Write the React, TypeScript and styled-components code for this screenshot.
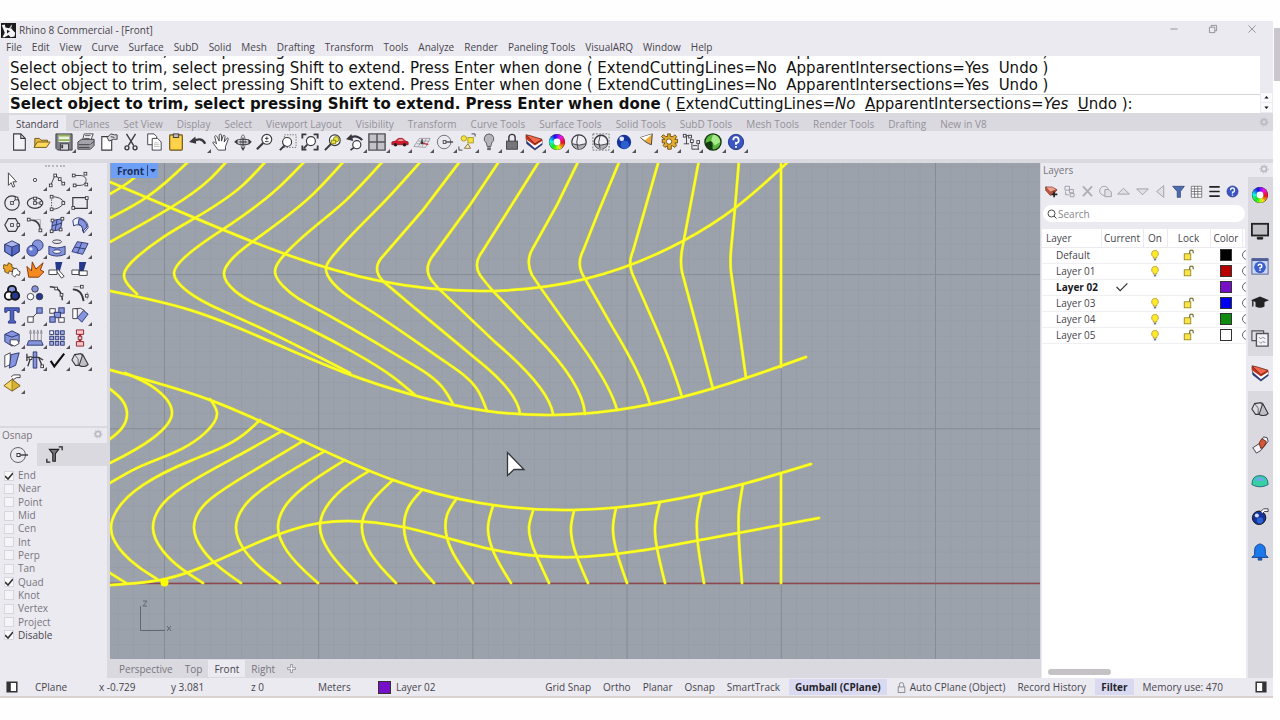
import React, { useState } from "react";
import styled, { createGlobalStyle, css } from "styled-components";

const c = {
  face: "#eceaf1",
  strip: "#dbd9e0",
  ink: "#47454d",
  dim: "#77757d",
  faint: "#939199",
  accent: "#d9daf1",
  canvas: "#9ca2ab",
};

const Global = createGlobalStyle`
  * { box-sizing: border-box; }
  body { margin: 0; background: #fefefe; }
  button, input { font: inherit; color: inherit; }
  button { border: 0; padding: 0; background: none; cursor: default; white-space: nowrap; }
`;

/* ---------- layout ---------- */

const Page = styled.div`
  display: flex;
  gap: 1px;
  min-height: 100vh;
  padding: 21px 0 22px;
  font: 10px/14px "Open Sans", "Noto Sans", sans-serif;
  color: ${c.ink};
`;
const Window = styled.div`
  flex: 1;
  min-width: 0;
  display: flex;
  flex-direction: column;
  background: ${c.face};
  border-bottom: 2px solid #d9d2cf;
`;
const PageScroll = styled.div`
  width: 6px;
  padding-top: 7px;
`;
const PageThumb = styled.div`
  height: 53px;
  background: #c9c7cd;
`;
const TitleBar = styled.header`
  display: flex;
  align-items: center;
  height: 18px;
  padding: 0 14px 0 1px;
  gap: 3px;
`;
const Title = styled.h1`
  flex: 1;
  margin: 0;
  font-size: 10px;
  font-weight: 400;
`;
const WindowButtons = styled.div`
  display: flex;
  gap: 25px;
  color: #88868e;
  button { width: 14px; height: 14px; }
`;
const MenuBar = styled.nav`
  display: flex;
  height: 17px;
  padding: 0 0 1px 6px;
  gap: 10px;
`;
const CommandArea = styled.section`
  display: flex;
  height: 57px;
  border-left: 9px solid ${c.face};
  background: #fff;
  color: #111;
  font: 15px/17px "DejaVu Sans", Verdana, sans-serif;
`;
const CommandText = styled.div`
  flex: 1;
  min-width: 0;
  display: flex;
  flex-direction: column;
  justify-content: flex-end;
  overflow: hidden;
  white-space: pre;
`;
const Line = styled.div`
  flex: none;
  padding-left: 1px;
  height: 17px;
`;
const Prompt = styled.div`
  flex: none;
  height: 19px;
  padding: 1px 0 0 1px;
  border-top: 1px solid #d6d5da;
`;
const Option = styled.button`
  &::first-letter { text-decoration: underline; }
`;
const Spinner = styled.div`
  width: 13px;
  display: flex;
  flex-direction: column;
  justify-content: flex-end;
  background: ${c.face};
  button { height: 9px; background: #fafafc; margin: 0 1px 1px; line-height: 0; }
`;
const Tabs = styled.div`
  display: flex;
  align-items: center;
  height: 18px;
  padding: 2px 4px 0 9px;
  background: ${c.strip};
  color: ${c.faint};
`;
const Tab = styled.button<{ $on?: boolean }>`
  height: 16px;
  padding: 2px 7px 0;
  ${(p) => p.$on && css`background: ${c.face}; color: ${c.ink};`}
`;
const Grow = styled.div`
  flex: 1;
`;
const Toolbar = styled.div`
  display: flex;
  width: 739px;
  max-width: 100%;
  margin-left: 8px;
  height: 28px;
  button { flex: 1; }
`;
const Tool = styled.button<{ $more?: boolean }>`
  position: relative;
  display: flex;
  align-items: center;
  justify-content: center;
  height: 22px;
  min-width: 0;
  ${(p) => p.$more && css`
    &::after {
      content: "";
      position: absolute;
      right: -1px;
      bottom: 0;
      border: 2px solid transparent;
      border-right-color: #55535a;
      border-bottom-color: #55535a;
    }
  `}
`;
const Work = styled.main`
  flex: 1;
  display: flex;
  border-top: 4px solid ${c.strip};
`;
const Left = styled.aside`
  width: 108px;
  display: flex;
  flex-direction: column;
  border-right: 1px solid ${c.strip};
`;
const ToolBox = styled.section`
  min-height: 265px;
  border-bottom: 2px solid ${c.strip};
`;
const Grip = styled.div`
  width: 20px;
  height: 4px;
  margin: 0 0 2px 45px;
  border-bottom: 2px dotted #b9b7be;
`;
const ToolGrid = styled.div`
  display: grid;
  grid-template-columns: repeat(4, 1fr);
  grid-template-rows: repeat(10, 1fr);
  width: 90px;
  height: 225px;
  margin-left: 1px;
`;
const PanelHead = styled.div`
  display: flex;
  align-items: center;
  justify-content: space-between;
  height: 14px;
  padding: 0 4px 0 2px;
  color: ${c.dim};
  h2 { margin: 0; font-size: 10px; font-weight: 400; }
`;
const SnapTabs = styled.div`
  display: flex;
  height: 23px;
  margin-top: 1px;
  button { width: 37px; display: grid; place-items: center; }
  button + button { flex: 1; padding-right: 36px; background: ${c.strip}; }
`;
const SnapList = styled.div`
  display: grid;
  grid-auto-rows: 1fr;
  height: 173px;
  margin-top: 3px;
  padding-left: 4px;
  line-height: 13px;
`;
const SnapItem = styled.label<{ $strong?: boolean }>`
  display: flex;
  align-items: center;
  gap: 4px;
  color: ${(p) => (p.$strong ? c.ink : c.dim)};
  input {
    appearance: none;
    width: 10px;
    height: 10px;
    margin: 0;
    border: 1px solid #d8d6dd;
    background: #f5f4f8;
  }
  input:checked {
    background: #fbfbfd url("data:image/svg+xml,%3Csvg xmlns='http://www.w3.org/2000/svg' viewBox='0 0 10 10'%3E%3Cpath d='M1 5l3 3 5-6' fill='none' stroke='%23333' stroke-width='1.6'/%3E%3C/svg%3E") center / 10px no-repeat;
  }
`;
const Center = styled.section`
  flex: 1;
  min-width: 0;
  display: flex;
  flex-direction: column;
  padding: 0 1px 0 2px;
  background: ${c.strip};
`;
const Viewport = styled.div`
  position: relative;
  flex: 1;
  background: ${c.canvas};
  overflow: hidden;
`;
const Drawing = styled.svg`
  position: absolute;
  inset: 0;
  width: 100%;
  height: 100%;
`;
const ViewLabel = styled.button`
  position: absolute;
  top: 0;
  left: 1px;
  display: flex;
  align-items: center;
  gap: 3px;
  height: 15px;
  padding: 0 0 0 6px;
  background: #6e9ff6;
  color: #1c2f5c;
  font-weight: 700;
  svg { border-left: 1px solid #2d4a84; }
`;
const ViewTabs = styled.div`
  display: flex;
  align-items: center;
  height: 19px;
  padding-left: 3px;
  color: ${c.dim};
  ${Tab} { padding: 0 6px; height: 17px; }
`;
const Right = styled.aside`
  width: 232px;
  display: flex;
  flex-direction: column;
`;
const RightBody = styled.div`
  flex: 1;
  display: flex;
`;
const Layers = styled.section`
  flex: 1;
  min-width: 0;
  display: flex;
  flex-direction: column;
  padding: 0 2px 0 1px;
`;
const LayerTools = styled.div`
  display: flex;
  height: 28px;
  width: 200px;
  button { flex: 1; display: grid; place-items: center; min-width: 0; }
`;
const Search = styled.label`
  display: flex;
  align-items: center;
  gap: 1px;
  height: 17px;
  margin: 0 1px 7px;
  padding: 0 4px;
  border-radius: 9px;
  background: #fff;
  input { flex: 1; min-width: 0; border: 0; padding: 0; height: 15px; background: none; outline: 0; }
  input::placeholder { color: #88868e; opacity: 1; }
`;
const TableArea = styled.div`
  flex: 1;
  display: flex;
  flex-direction: column;
  justify-content: space-between;
  background: #fff;
  overflow: hidden;
`;
const LayerTable = styled.table`
  width: 100%;
  table-layout: fixed;
  border-collapse: collapse;
  th { height: 18px; padding: 0; font-weight: 400; border-right: 1px solid #eceaf0; border-bottom: 1px solid #eceaf0; overflow: hidden; }
  th:first-child { text-align: left; padding-left: 4px; }
  td { height: 16px; padding: 0; text-align: center; border-bottom: 1px solid #f0eff3; line-height: 0; overflow: hidden; }
  td:first-child { text-align: left; padding-left: 14px; line-height: 14px; }
`;
const LayerRow = styled.tr<{ $current?: boolean }>`
  ${(p) => p.$current && css`font-weight: 700; color: #1b1a1f;`}
`;
const Swatch = styled.button<{ $color: string; $size?: number }>`
  width: ${(p) => p.$size ?? 12}px;
  height: ${(p) => p.$size ?? 12}px;
  border: 1px solid #333;
  background: ${(p) => p.$color};
`;
const ScrollThumb = styled.div`
  width: 63px;
  height: 6px;
  margin: 0 0 3px 6px;
  border-radius: 3px;
  background: #c4c2c5;
`;
const SideTabs = styled.nav`
  width: 25px;
  display: flex;
  flex-direction: column;
  background: ${c.strip};
`;
const SideIcons = styled.div`
  display: grid;
  grid-auto-rows: 1fr;
  height: 393px;
`;
const SideTab = styled.button<{ $on?: boolean }>`
  display: grid;
  place-items: center;
  padding-right: 1px;
  ${(p) => p.$on && css`background: ${c.face};`}
`;
const StatusBar = styled.footer`
  display: flex;
  align-items: center;
  height: 18px;
  padding: 0 6px;
`;
const Cell = styled.span<{ $w: number; $end?: boolean }>`
  width: ${(p) => p.$w}px;
  display: flex;
  align-items: center;
  justify-content: ${(p) => (p.$end ? "flex-end" : "flex-start")};
  gap: 5px;
  white-space: nowrap;
`;
const Toggle = styled.button<{ $on?: boolean }>`
  height: 16px;
  padding: 0 6px;
  display: flex;
  align-items: center;
  gap: 3px;
  ${(p) => p.$on && css`
    margin: 0 3px;
    background: ${c.accent};
    font-weight: 700;
    color: #24232a;
  `}
`;

/* ---------- icons, all on a 20 x 20 board ---------- */

const K = "#3a383f";
const wheel = (r: number, w: number) =>
  Array.from({ length: 24 }, (_, i) => {
    const p = (a: number) => `${10 + r * Math.cos(a)} ${10 + r * Math.sin(a)}`;
    const a = (i * Math.PI) / 12;
    return (
      <path key={i} d={`M${p(a)}A${r} ${r} 0 0 1 ${p(a + 0.3)}`} stroke={`hsl(${i * 15},95%,52%)`} strokeWidth={w} fill="none" />
    );
  });
const node = (x: number, y: number) => <rect key={`${x}-${y}`} x={x - 1.5} y={y - 1.5} width="3" height="3" fill="#fff" stroke={K} />;
const B = "#8594dc";
const BD = "#27326e";

const art: Record<string, React.ReactNode> = {
  new: <path d="M4 1h8l5 5v13H4zM12 1v5h5" fill="#f3f3f5" stroke={K} strokeWidth="1.200" />,
  open: <><path d="M2 16V6h5l2 2h7v3" fill="#e6b93c" stroke="#6b5412" /><path d="M1 16l4-6h14l-4 6z" fill="#ffd95c" stroke="#6b5412" /></>,
  save: <><path d="M1 1h18v18H3l-2-2z" fill="#7e8087" stroke={K} /><path d="M4 2h12v8H4z" fill="#eef2dc" /><path d="M4 3h12M4 8h12" stroke="#8cb45c" strokeWidth="2" /><path d="M6 12h9v7H6z" fill="#d8d8dc" stroke={K} /><path d="M8 13v4" stroke={K} strokeWidth="2" /></>,
  print: <><path d="M6 9l2-8h10l-3 8" fill="#fff" stroke={K} /><path d="M1 10l4-3h14v7l-4 4H1z" fill="#a3a2a9" stroke={K} /><path d="M2 13h12M9 3h6M8 6h6M15 13l4-4M2 16h12" stroke={K} /></>,
  props: <><path d="M2 4h11v15H2z" fill="#fff" stroke={K} strokeWidth="1.200" /><path d="M8 5l4-4 4 1h3v5h-4l-5 2z" fill="#d6d5da" stroke={K} /><path d="M12 4l4 1" stroke={K} /></>,
  cut: <><path d="M5 1l8 13M15 1L7 14" stroke={K} strokeWidth="1.5" /><circle cx="5.500" cy="16.500" r="2.200" fill="none" stroke={K} strokeWidth="1.5" /><circle cx="14.500" cy="16.500" r="2.200" fill="none" stroke={K} strokeWidth="1.5" /></>,
  copy: <><path d="M3 1h7l3 3v9H3z" fill="#fff" stroke={K} /><path d="M8 6h6l4 4v9H8z" fill="#fff" stroke={K} /><path d="M10 11h5M10 13h6M10 15h6" stroke="#bbb" /></>,
  paste: <><rect x="3" y="2" width="14" height="17" rx="1" fill="#ffd24a" stroke="#6b5412" strokeWidth="1.300" /><rect x="7" y="1" width="6" height="4" fill="#b9b8bf" stroke={K} /></>,
  undo: <><path d="M5 9c5-3 10-3 13 3" fill="none" stroke={K} strokeWidth="2.600" /><path d="M0 10l7-6 1 8z" fill={K} /></>,
  hand: <path d="M7 19l-6-8c0-2 2-1 4 1L3 4c1-2 2-1 3 1l2 4V2c1-1 2-1 2.500 0v7l2-6c1-1 2 0 2 1l-1 6 3-4c1-1 2 0 1.500 1L15 15v4z" fill="#fff" stroke={K} />,
  rotate: <><ellipse cx="10" cy="10" rx="8" ry="3" fill="none" stroke={K} strokeWidth="1.200" /><ellipse cx="10" cy="10" rx="2.500" ry="8" fill="none" stroke="#66646b" /><path d="M10 5v10M5 10h10" stroke={K} strokeWidth="1.300" /><path d="M0 10l4-3v5zM20 10l-4-3v5zM10 20l-2-4h4z" fill={K} /></>,
  zoom: <><circle cx="12" cy="7" r="5.500" fill="#fff" stroke={K} strokeWidth="1.3" /><path d="M8 11l-7 7" stroke={K} strokeWidth="2.4" /><path d="M10 6h4M12 4v4M10 9.500h4" stroke={K} /></>,
  zoomwin: <><path d="M6 2h13v14H6z" fill="none" stroke="#666" strokeDasharray="1.500 1.500" /><circle cx="9" cy="10" r="5" fill="#fff" stroke={K} strokeWidth="1.3" /><path d="M6 14l-5 5" stroke={K} strokeWidth="2.2" /></>,
  zoomext: <><circle cx="11" cy="9" r="5" fill="#fff" stroke={K} strokeWidth="1.3" /><path d="M7 13l-4 4" stroke={K} strokeWidth="2" /><path d="M1.500 6V1.500H6M14 1.500h4.500V6M18.500 14v4.500H14M1.500 14v4.500H6" fill="none" stroke={K} strokeWidth="2" /></>,
  zoomsel: <><circle cx="12" cy="8" r="6" fill="#fff" stroke={K} strokeWidth="1.3" /><path d="M8 12l-7 7" stroke={K} strokeWidth="2.2" /><circle cx="13.500" cy="7" r="3" fill="#e6e03a" stroke="#87810e" /><path d="M8 8h5v4H8z" fill="#e6e03a" stroke="#87810e" /></>,
  zoomundo: <><circle cx="12" cy="13" r="4.500" fill="#fff" stroke={K} strokeWidth="1.3" /><path d="M9 16l-4 3" stroke={K} strokeWidth="2" /><path d="M4 6c5-4 11-2 14 2" fill="none" stroke={K} strokeWidth="2.400" /><path d="M0 7l6-6 2 8z" fill={K} /></>,
  views: <><path d="M1 1h18v18H1z" fill="#c3c2c8" stroke="#55535a" strokeWidth="1.600" /><path d="M10 1v18M1 10h18" stroke="#55535a" strokeWidth="1.600" /></>,
  car: <><path d="M1 12v-2l4-1 3-3h5l3 3 3 1v3H1z" fill="#d01c2c" stroke="#9c1f2c" /><path d="M7 9l2-2h4l1 2z" fill="#e89ca2" /><circle cx="5" cy="13" r="2" fill="#222" /><circle cx="15" cy="13" r="2" fill="#222" /></>,
  cplane: <><path d="M1 15l6-9h12l-5 10zM4 12h12M6 9h12M6 15l5-9M10 15l5-9" fill="none" stroke="#9b9aa1" /><path d="M10 11l7 2" stroke="#c33" strokeWidth="1.5" /><path d="M10 11V7" stroke="#444" strokeWidth="1.500" /><circle cx="10" cy="11" r="1.500" fill={K} /></>,
  osnap: <><circle cx="9" cy="10" r="7.500" fill="none" stroke="#66646b" /><path d="M10 10h9" stroke={K} strokeWidth="1.400" /><rect x="8" y="8.500" width="3" height="3" fill="#fff" stroke={K} /></>,
  shapes: <><rect x="11" y="5" width="6" height="6" fill="#f5e23b" stroke="#a89a22" /><circle cx="6.500" cy="6" r="3" fill="#f5e23b" stroke="#a89a22" /><path d="M7 17l4-5 3 5z" fill="#f7ecc0" stroke="#8b6d32" /><path d="M15 1h4v3M1 15v4h4" fill="none" stroke={K} /></>,
  bulb: <><path d="M10 1a5.500 5.500 0 0 0-3 10l1 4h4l1-4a5.500 5.500 0 0 0-3-10z" fill="#b5b4ba" stroke="#55535a" /><path d="M8 16h4v3H8z" fill="#66646b" /></>,
  lock: <><path d="M6.500 9V5a3.500 3.500 0 0 1 7 0v4" fill="none" stroke={K} strokeWidth="1.600" /><rect x="4" y="9" width="12" height="9" fill="#77757c" stroke={K} /></>,
  layers: <><path d="M1 3l1 9 9 7 8-6V8z" fill="#24388c" stroke="#222" strokeWidth=".6" /><path d="M1 3l1 6 9 8 8-6V8z" fill="#fff" /><path d="M1 3v4l10 7 8-5V7z" fill="#c4341e" /><path d="M1 2l5 1 13 4-8 5z" fill="#f0684a" stroke="#5a1a12" strokeWidth=".8" /></>,
  wheel: <><circle cx="10" cy="10" r="9" fill="#333" />{wheel(6.2, 4.6)}<circle cx="10" cy="10" r="3.800" fill="#fff" /></>,
  sphere: <><circle cx="10" cy="10" r="8" fill="#f1f0f4" stroke={K} strokeWidth="1.400" /><path d="M3 12q7 3 14 0q-1 5-7 6q-6-1-7-6z" fill="#b3b2b9" /><path d="M9 2q-3 8 0 16M3 12q7 3 14 0" fill="none" stroke={K} /></>,
  spheredots: <><path d="M1 1h18v18H1z" fill="none" stroke="#666" strokeDasharray="2 1.500" /><circle cx="10" cy="10" r="7.500" fill="#f1f0f4" stroke={K} strokeWidth="1.600" /><path d="M3 12q7 3 14 0q-1 5-7 6q-6-1-7-6z" fill="#b3b2b9" /><path d="M9 3q-3 7 0 14M3 12q7 3 14 0" fill="none" stroke={K} /></>,
  ball: <><circle cx="10" cy="10" r="8" fill="#16329c" /><circle cx="11" cy="13" r="4.500" fill="#2c5fd0" /><circle cx="7.500" cy="6.500" r="2.600" fill="#dfe8ff" /></>,
  cone: <><path d="M4 5l13-4-1 12c-4-1-8-4-12-8z" fill="#f0aa3a" stroke={K} /><path d="M4 5l13-4-8 7z" fill="#fff" /></>,
  gear: <><path d="M8.500 1h3v3h3l2-2 2 2-2 3h3v4h-3l2 3-2 2-3-2h-1v4h-4v-4l-3 2-2-2 2-3h-3V7h3L1.500 4l2-2 3 2h2z" fill="#e5ae30" stroke="#6b4a0c" /><circle cx="10" cy="9.500" r="3" fill="#fff" stroke="#6b4a0c" /></>,
  dims: <><path d="M2 3h7M5 3v9M2 12h6M11 9v9M11 18h8M18 10v8M12 14h5" stroke={K} fill="none" />{node(3, 3)}{node(9, 4)}{node(11, 9)}{node(18, 10)}</>,
  globe: <><circle cx="10" cy="10" r="9" fill="#59b93c" stroke="#14340e" strokeWidth="1.500" /><path d="M10 2a8 8 0 0 1 8 8l-6 4-4-6z" fill="#a7ea8c" /><path d="M1.500 11l6-2 2 2v8a8.500 8.500 0 0 1-8-8z" fill="#163a12" /></>,
  help: <><circle cx="10" cy="10" r="8.500" fill="#3b55c4" stroke="#22357f" /><path d="M7 8q0-3.500 3-3.500t3 3.500-3 3v2M10 14.500v2" fill="none" stroke="#fff" strokeWidth="2" /></>,

  select: <path d="M6 2v14l3-3 2 5 2-1-2-5h4z" fill="#fff" stroke={K} />,
  point: <circle cx="10" cy="10" r="1.800" fill="#fff" stroke={K} />,
  polyline: <><path d="M3 16L8 4l9 10" fill="none" stroke={K} />{node(3, 16)}{node(8, 5)}{node(13, 9)}{node(17, 14)}</>,
  curve: <><path d="M3 5h7c10 0 8 11 0 11H4" fill="none" stroke={K} />{node(3, 5)}{node(16, 3)}{node(17, 15)}{node(4, 16)}</>,
  circle: <><circle cx="10" cy="10" r="8" fill="none" stroke={K} strokeWidth="1.300" /><path d="M10 10l5-5" stroke={K} />{node(10, 10)}{node(15, 5)}</>,
  ellipse: <><ellipse cx="10" cy="10" rx="8.500" ry="6" fill="none" stroke={K} strokeWidth="1.300" /><path d="M10 10h7M10 10V5" stroke={K} />{node(10, 10)}{node(10, 5)}{node(17, 10)}</>,
  arc: <><path d="M4 3q10 0 14 6M4 17q10 0 14-8" fill="none" stroke={K} /><path d="M4 3v14" stroke={K} strokeDasharray="1.500 1.500" />{node(4, 3)}{node(4, 17)}{node(17, 10)}</>,
  rect: <><path d="M2 4h16v12H2z" fill="none" stroke={K} strokeWidth="1.300" />{node(2.5, 15.5)}{node(17.5, 4.5)}</>,
  polygon: <><path d="M2 10l4-7h8l4 7-4 7H6z" fill="none" stroke={K} strokeWidth="1.300" />{node(10, 10)}{node(17, 10)}</>,
  fillet: <><path d="M3 4q13 0 13 13" fill="none" stroke={K} strokeWidth="1.800" /><path d="M3 4h13v13" fill="none" stroke="#aaa" />{node(3, 4)}{node(16, 16)}</>,
  surface: <><path d="M5 5l11-2-2 12-10 2z" fill={B} stroke={BD} /><path d="M10 4L8 16M4 11l11-3" stroke={BD} />{node(5, 5)}{node(16, 3)}{node(14, 15)}{node(4, 17)}</>,
  sweep: <><path d="M2 5q5-5 10-2 7 3 7 10l-5 6q0-8-5-9-3-1-6 1z" fill="#eef0fb" stroke={BD} /><path d="M9 3q7 1 9 9l-5 5q0-7-5-8z" fill={B} stroke={BD} /></>,
  box: <><path d="M2 6l8-4 8 4v8l-8 5-8-5z" fill="#a9b4ec" stroke={BD} /><path d="M2 6l8 3v10l-8-5z" fill="#7384d6" stroke={BD} /><path d="M10 9l8-3v8l-8 5z" fill="#5568c4" stroke={BD} /></>,
  spheres: <><circle cx="13" cy="7" r="6" fill={B} stroke={BD} /><circle cx="7" cy="13" r="6" fill="#6a7bd2" stroke={BD} /><circle cx="5.500" cy="11" r="1.800" fill="#dfe4ff" /></>,
  pipe: <><ellipse cx="10" cy="3" rx="5" ry="2" fill="none" stroke={K} /><path d="M1 8q9 4 18 0v9q-9 4-18 0z" fill={B} stroke={BD} /><ellipse cx="10" cy="14" rx="4.500" ry="2" fill="#fff" stroke={BD} /></>,
  mesh: <><path d="M7 3l12 2-6 12-12-3z" fill={B} stroke={BD} /><path d="M4 9l12 2M12 4L7 16" stroke={BD} /></>,
  puzzle: <><path d="M1 4l4 1 1-3 4 2v3l3 1-2 4-4-1-1 3-4-2v-3l-2-1z" fill="#eba42c" stroke="#6b4a0c" /><path d="M11 9l4-1 2 3 2 1-1 4-3-1-2 3-3-3z" fill="#fff" stroke={K} /></>,
  explode: <path d="M3 18L1 6l5 5 1-10 4 8 8-7-3 8 4 2-6 6z" fill="#f58a1e" stroke="#7a2f08" />,
  trim: <><path d="M8 1h8l-3 11-4-2z" fill="#24388c" /><path d="M1 10h9v5H1zM11 9l7 8-3 2-5-7" fill="#fff" stroke={K} /></>,
  split: <><path d="M9 1h8l-3 10H9z" fill="#24388c" /><path d="M1 10h8v5H1zM9 11h9v5H9z" fill="#fff" stroke={K} /></>,
  boolean: <><circle cx="10" cy="6.500" r="4.500" fill={B} stroke="#111" strokeWidth="2" /><circle cx="6.500" cy="13" r="4.500" fill="#fff" stroke="#111" strokeWidth="2" /><circle cx="13.500" cy="13" r="4.500" fill="#24388c" stroke="#111" strokeWidth="2" /></>,
  group: <><circle cx="10" cy="5.500" r="3.600" fill={B} stroke={K} /><circle cx="5" cy="14" r="3.600" fill="#fff" stroke={K} /><circle cx="15" cy="14" r="3.600" fill="#24388c" stroke={K} /></>,
  chamfer: <><path d="M2 3q13 0 14 15" fill="none" stroke={K} strokeWidth="1.600" />{node(9, 5)}{node(15, 12)}</>,
  extend: <><path d="M2 6q10 0 12 13" fill="none" stroke={K} strokeWidth="2" /><path d="M3 3h8M18 9v8" stroke="#888" />{node(12, 3)}{node(17.5, 13)}</>,
  text: <path d="M2 2h16v5h-2l-1-2h-3v11l2 1v2H6v-2l2-1V5H5L4 7H2z" fill="#4c62c8" stroke={BD} />,
  move: <><path d="M5 15l9-9" stroke={K} /><rect x="2" y="12" width="6" height="6" fill="#fff" stroke={K} /><rect x="12" y="2" width="6" height="6" fill={B} stroke={BD} /></>,
  dup: <><rect x="2" y="3" width="6" height="5" fill="#fff" stroke={K} /><rect x="12" y="2" width="6" height="6" fill={B} stroke={BD} /><rect x="7" y="7" width="7" height="6" fill={B} stroke={BD} /><rect x="2" y="12" width="6" height="6" fill={B} stroke={BD} /><rect x="12" y="13" width="6" height="5" fill="#fff" stroke={K} /></>,
  orient: <><path d="M2 3h5v11H2z" fill="#fff" stroke={K} /><path d="M7 13l7-8 5 4-7 9z" fill={B} stroke={BD} /><path d="M5 3q6-2 10 2" fill="none" stroke={K} /></>,
  block: <><path d="M2 6l8-4 8 4v8l-8 5-8-5z" fill={B} stroke={BD} /><path d="M2 6l8 3 8-3" fill="none" stroke={BD} /><path d="M8 12h8l2 4-5 3-5-2z" fill="#fff" stroke={K} /></>,
  array: <><path d="M3 13h14l2 5H1z" fill={B} stroke={BD} /><path d="M5 14V4M9 14V4M13 14V4M17 14V4M4 5l1-4 1 4M8 5l1-4 1 4M12 5l1-4 1 4M16 5l1-4 1 4" fill="none" stroke="#88868e" /></>,
  gridarr: <>{[4, 10, 16].flatMap((x) => [4, 10, 16].map((y) => <rect key={`${x}-${y}`} x={x - 2} y={y - 2} width="4" height="4" fill={x > 8 || y > 8 ? "#a8b2ea" : "#fff"} stroke={BD} />))}</>,
  dimension: <><path d="M10 2v16" stroke="#c8202c" strokeWidth="2.400" /><path d="M6 1h8v5H6zM8 8h4v4H8zM6 14h8v5H6z" fill="#f4c6ca" stroke="#8c1620" /></>,
  shear: <><path d="M2 5l6-3v13l-6 3z" fill="#fff" stroke={K} /><path d="M9 4l9-2-4 14-7 3z" fill={B} stroke={BD} /></>,
  align: <><path d="M8 1h4v18H8z" fill={B} stroke={BD} /><path d="M1 3v8M1 7h13l5 3M5 8l-3 9M14 7l4 10" fill="none" stroke={K} strokeWidth="1.500" />{node(5, 8)}{node(18, 17)}</>,
  check: <path d="M3 11l4 6L18 3" fill="none" stroke="#111" strokeWidth="2.400" />,
  solids: <><path d="M1 10l3-6 7-1 4 5-3 8H5z" fill="#dddce2" stroke={K} strokeWidth="1.200" /><path d="M8 16V9L4 4" fill="none" stroke={K} strokeWidth=".8" /><path d="M13 4l6 11q-4 4-10 1z" fill="#c0bfc6" stroke={K} strokeWidth="1.200" /></>,
  pyramid: <><path d="M1 13l9-7 9 7-9 6z" fill="#f4d860" stroke="#6b5412" /><path d="M10 6v13l9-6z" fill="#d8b234" stroke="#6b5412" strokeWidth=".6" /><path d="M9 3l3-2h7v3h-4l-3 2-2-1" fill="#fff" stroke={K} /></>,

  newlayer: <><path d="M1 3v5l7 8 6-3 4-5V7z" fill="#c4553e" stroke="#7c3328" /><path d="M1 3l7 8 10-4-7-4z" fill="#f0a08c" stroke="#7c3328" /><path d="M14 10v9M10 14.500h9" stroke="#222" strokeWidth="2.600" /></>,
  sublayer: <path d="M3 2h7v6H3zM4 10v5h5M10 7h6v5h-6zM11 13h6v5h-6z" fill="#eceaf1" stroke="#99979f" strokeWidth="1.300" />,
  del: <path d="M3 2l14 15M17 2L3 17" stroke="#b0aeb5" strokeWidth="3" />,
  dupl: <><circle cx="8" cy="9" r="7" fill="none" stroke="#a3a1a9" strokeWidth="1.500" /><path d="M9 7h6l4 4v7H9z" fill="#e2e0e6" stroke="#a3a1a9" strokeWidth="1.500" /></>,
  up: <path d="M10 5l9 9H1z" fill="#e2e0e6" stroke="#99979f" strokeWidth="1.300" />,
  down: <path d="M10 15l9-9H1z" fill="#e2e0e6" stroke="#99979f" strokeWidth="1.300" />,
  back: <path d="M4 10l11-9v18z" fill="#e2e0e6" stroke="#99979f" strokeWidth="1.300" />,
  filter: <path d="M1 2h18l-6 8v9H8v-9z" fill="#4c6cb4" stroke="#23345f" />,
  table: <path d="M2 2h16v17H2zM2 6h16M2 10h16M2 14h16M7 2v17M12 2v17" fill="#fff" stroke="#66646b" strokeWidth="1.200" />,
  menu: <path d="M2 3h16M2 10h16M2 17h16" stroke="#222" strokeWidth="2.600" />,
  monitor: <><rect x="1" y="2" width="18" height="13" fill="#c2c1c7" stroke="#222" strokeWidth="2" /><path d="M7 17h6v2H7z" fill="#222" stroke="#222" /></>,
  webhelp: <><rect x="1" y="2" width="18" height="17" fill="#ccd6f6" stroke="#4c5c94" /><path d="M1 3h18" stroke="#4c5c94" strokeWidth="3" /><circle cx="10" cy="11.500" r="6.500" fill="#3b60cc" /><path d="M8 10q0-2 2-2t2 2-2 2v1M10 14v1.500" fill="none" stroke="#fff" strokeWidth="1.600" /></>,
  cap: <><path d="M0 8l10-4 10 4-10 4z" fill="#222" /><path d="M5 10v5q5 3 10 0v-5" fill="#222" /><path d="M2 8v7" stroke="#222" strokeWidth="1.500" /></>,
  pages: <><path d="M1 2h13v11H1z" fill="#e2e1e7" stroke="#55535a" strokeWidth="1.300" /><path d="M6 5h13v14H6z" fill="#f4f3f7" stroke="#55535a" strokeWidth="1.500" /><path d="M9 9l2 2 2-2 3 2M9 14l2 2 2-2 3 1" fill="none" stroke="#88868e" /></>,
  tube: <><path d="M2 13l4 6 5-3 8-10-1-4-4-1-4 7z" fill="#f4f3f7" stroke={K} /><path d="M9 8l3-5 5 3-2 5-4 3z" fill="#d4573a" stroke="#6b2412" /></>,
  dome: <><path d="M1 14q0-10 9-10t9 10q-9 5-18 0z" fill="#37d0a4" stroke="#24667c" /><path d="M4 9q6-6 12 0-6 2-12 0z" fill="#6fa6f0" /></>,
  bomb: <><circle cx="9" cy="12" r="7.500" fill="#16329c" stroke="#111" /><circle cx="10" cy="15" r="3.500" fill="#2c5fd0" /><circle cx="6.500" cy="9.500" r="2.300" fill="#cfe0ff" /><path d="M11 5l3-3h5v3h-4l-2 2" fill="#fff" stroke={K} /></>,
  bell: <path d="M10 1c-4 1-6 3-6 8v4l-3 3h18l-3-3V9c0-5-2-7-6-8zM8 17h4v2H8z" fill="#1d78ea" stroke="#123c8c" />,
  cog: <><circle cx="10" cy="10" r="5" fill="none" stroke="#bab8bf" strokeWidth="3" /><circle cx="10" cy="10" r="8" fill="none" stroke="#bab8bf" strokeWidth="2" strokeDasharray="3 3" /></>,
  litbulb: <><path d="M10 2a6 6 0 0 0-3 11v2h6v-2a6 6 0 0 0-3-11z" fill="#ffe92e" stroke="#9a8508" /><path d="M8 16h4v3H8z" fill="#77757c" /></>,
  unlock: <><path d="M11 9V5a3 3 0 0 1 6 0v2" fill="none" stroke="#77702a" strokeWidth="2" /><rect x="2" y="8" width="11" height="10" fill="#fbe44a" stroke="#8b7d12" strokeWidth="1.300" /></>,
  tick: <path d="M1 10l6 6L19 4" fill="none" stroke="#333" strokeWidth="2" />,
  search: <><circle cx="9" cy="9" r="7" fill="none" stroke={K} strokeWidth="1.800" /><path d="M14 14l5 5" stroke={K} strokeWidth="2" /></>,
  snapfilter: <><path d="M4 4h11l-4 5v9H8V9z" fill="#77757c" stroke="#222" strokeWidth="1.300" /><path d="M15 1h4v4M1 15v4h4" fill="none" stroke="#222" strokeWidth="1.500" /></>,
  padlock: <><path d="M6 9V5a4 4 0 0 1 8 0v4" fill="none" stroke="#88868e" strokeWidth="1.700" /><rect x="4" y="9" width="12" height="10" fill="none" stroke="#88868e" strokeWidth="1.700" /></>,
  leftpane: <><path d="M2 2h16v16H2z" fill="#fff" stroke="#333" strokeWidth="2.500" /><path d="M2 2h6v16H2z" fill="#333" /></>,
  rightpane: <><path d="M2 2h16v16H2z" fill="#fff" stroke="#333" strokeWidth="2.500" /><path d="M12 2h6v16h-6z" fill="#333" /></>,
  plus: <path d="M8 1h4v7h7v4h-7v7H8v-7H1V8h7z" fill="#fff" stroke="#88868e" strokeWidth="1.800" />,
  minimize: <path d="M4 10h12" stroke="currentColor" strokeWidth="1.400" />,
  restore: <path d="M4 7h9v9H4zM7 7V4h9v9h-3" fill="none" stroke="currentColor" strokeWidth="1.400" />,
  close: <path d="M4 4l12 12M16 4L4 16" stroke="currentColor" strokeWidth="1.400" />,
  arrowdown: <path d="M4 7h12l-6 7z" fill="currentColor" />,
  arrowup: <path d="M4 13h12l-6-7z" fill="currentColor" />,
  app: <><path d="M0 0h20v20H0z" fill="#1a1a1c" /><path d="M1 3l4-1 1 4 5 1 3-5 1 7 4 4-1 5-5 1-3-3-5 3H2l3-6z" fill="#f4f4f4" /><path d="M8 9l4 2-4 3zM13 4l2 3-2 1z" fill="#1a1a1c" /></>,
};

const Icon = ({ name, size = 18 }: { name: string; size?: number }) => (
  <svg width={size} height={size} viewBox="0 0 20 20" aria-hidden="true">{art[name]}</svg>
);

/* ---------- data ---------- */

const menus = ["File", "Edit", "View", "Curve", "Surface", "SubD", "Solid", "Mesh", "Drafting", "Transform", "Tools", "Analyze", "Render", "Paneling Tools", "VisualARQ", "Window", "Help"];
const toolTabs = ["Standard", "CPlanes", "Set View", "Display", "Select", "Viewport Layout", "Visibility", "Transform", "Curve Tools", "Surface Tools", "Solid Tools", "SubD Tools", "Mesh Tools", "Render Tools", "Drafting", "New in V8"];
/* a trailing "+" marks a button that opens a flyout */
const topTools = "new open save+ print props cut copy paste undo+ hand rotate zoom zoomwin zoomext zoomsel zoomundo+ views+ car+ cplane+ osnap+ shapes+ bulb+ lock+ layers+ wheel+ sphere spheredots+ ball+ cone+ gear+ dims+ globe+ help+".split(" ");
const sideTools = "select point+ polyline+ curve+ circle+ ellipse+ arc+ rect+ polygon+ fillet+ surface+ sweep+ box+ spheres+ pipe+ mesh+ puzzle+ explode trim split boolean+ group chamfer+ extend+ text+ move+ dup orient+ block+ array+ gridarr+ dimension+ shear+ align+ check+ solids+ pyramid+".split(" ");
const snaps = ["End", "Near", "Point", "Mid", "Cen", "Int", "Perp", "Tan", "Quad", "Knot", "Vertex", "Project", "Disable"];
const layerTools = ["newlayer", "sublayer", "del", "dupl", "up", "down", "back", "filter", "table", "menu", "help"];
const panels = ["wheel", "monitor", "webhelp", "cap", "pages", "layers", "solids", "tube", "dome", "bomb", "bell"];
const layers = [
  ["Default", "#000000"], ["Layer 01", "#b80000"], ["Layer 02", "#7510c8"],
  ["Layer 03", "#0000f0"], ["Layer 04", "#0e8c10"], ["Layer 05", "#ffffff"],
];

/* smooth model curves in sheet coordinates, one "x,y x,y ..." list per curve */
const curves = [
  "110,182 195,218 285,254 380,281 480,291 585,279 683,241 735,208 790,160",
  "110,291 190,310 260,337 343,372 413,395 487,411 553,415 617,410 682,397 746,378 806,357",
  "150,160 134,178 110,194",
  "190,160 165,183 147,197 110,218",
  "228,160 210,179 170,208 110,242",
  "267,160 243,185 195,218 137,257 124,275 137,294",
  "306,160 277,189 222,230 185,257 174,273 187,291 223,311 267,331 350,373",
  "345,160 310,197 252,242 231,260 224,273 235,291 267,309 353,352 393,377 415,395",
  "384,160 343,203 285,254 275,272 283,286 317,309 410,363 443,388 453,404",
  "422,160 383,203 332,257 326,268 333,283 363,306 447,363 477,389 487,411",
  "110,370 210,400 303,441 393,480 480,503 573,510 660,502 743,484 811,464",
  "110,585 165,579 243,549 320,523 403,527 490,549 577,557 657,548 738,533 819,518",
  "110,389 122,400 127,413 122,428 110,439",
  "125,373 153,387 172,413 153,438 110,463",
  "210,399 217,413 205,433 137,468 110,483",
  "260,420 243,435 190,461 143,485 117,510 111,528 123,553 157,579",
  "110,573 126,583",
  "282,431 243,453 183,487 159,509 153,528 163,551 203,583",
  "303,441 253,471 217,494 200,510 194,527 203,550 241,583",
  "325,451 270,484 243,508 236,527 245,551 280,583",
  "345,460 303,488 284,508 278,527 287,551 318,583",
  "369,471 337,494 320,527 329,551 357,583",
  "393,480 373,500 362,524 371,554 396,583",
  "422,490 408,508 404,527 411,553 434,583",
  "457,498 447,515 446,533 453,553 473,583",
  "493,506 488,527 494,553 511,583",
  "533,511 529,527 537,557 549,583",
  "574,511 571,527 577,557 588,583",
  "616,508 613,527 617,553 627,583",
  "660,502 655,527 657,548 665,583",
  "702,494 697,520 698,545 704,583",
  "743,484 739,510 739,540 742,583",
  "781,474 781,583",
  "781,160 781,367",
];

/* ribs with straight flanks and a tight bend */
const bentRibs = [
  "M461 160L423 210L384 255Q370 269 384 282L410 304L475 358Q518 392 520 414",
  "M500 160L470 205L435 253Q422 268 432 281L438 288L495 342Q549 388 553 414",
  "M540 160L482 252Q473 264 480 275Q485 282 493 291L537 337Q583 384 585 414",
  "M579 160L557 205L533 248Q525 261 532 275L540 287L587 353Q612 390 617 410",
  "M620 160L598 213L583 251Q576 264 584 277L613 328Q642 376 650 404",
  "M659 160L633 251Q628 262 632 273L657 330Q674 370 682 397",
  "M699 160L682 250Q680 262 682 272L697 328L713 389",
  "M739 160L735 208L731 250Q730 262 731 272L738 320L746 378",
];

/* natural cubic spline over chord length, written as cubic Bezier segments */
function spline(list: string) {
  const p = list.split(" ").map((s) => s.split(",").map(Number));
  const n = p.length - 1;
  const h = p.slice(1).map((q, i) => Math.hypot(q[0] - p[i][0], q[1] - p[i][1]));
  const slopes = [0, 1].map((k) => {
    const low: number[] = [], mid: number[] = [], up: number[] = [], rhs: number[] = [];
    const s = h.map((len, i) => (p[i + 1][k] - p[i][k]) / len);
    for (let i = 0; i <= n; i++) {
      if (i === 0) { low.push(0); mid.push(2); up.push(1); rhs.push(3 * s[0]); }
      else if (i === n) { low.push(1); mid.push(2); up.push(0); rhs.push(3 * s[n - 1]); }
      else {
        low.push(h[i]); mid.push(2 * (h[i - 1] + h[i])); up.push(h[i - 1]);
        rhs.push(3 * (h[i] * s[i - 1] + h[i - 1] * s[i]));
      }
    }
    for (let i = 1; i <= n; i++) {
      const f = low[i] / mid[i - 1];
      mid[i] -= f * up[i - 1];
      rhs[i] -= f * rhs[i - 1];
    }
    const m = Array<number>(n + 1).fill(0);
    m[n] = rhs[n] / mid[n];
    for (let i = n - 1; i >= 0; i--) m[i] = (rhs[i] - up[i] * m[i + 1]) / mid[i];
    return m;
  });
  let d = `M${p[0]}`;
  for (let i = 0; i < n; i++) {
    const a = [0, 1].map((k) => p[i][k] + (slopes[k][i] * h[i]) / 3);
    const b = [0, 1].map((k) => p[i + 1][k] - (slopes[k][i + 1] * h[i]) / 3);
    d += `C${a} ${b} ${p[i + 1]}`;
  }
  return d;
}
const paths = [...curves.map(spline), ...bentRibs];

const Scene = () => (
  <Drawing aria-label="Front view">
    <defs>
      <pattern id="minor" width="15.42" height="15.42" patternUnits="userSpaceOnUse" x="164" y="582.500">
        <path d="M.5 0V16M0 .5H16" stroke="#979da6" fill="none" />
      </pattern>
      <pattern id="major" width="154.2" height="154.2" patternUnits="userSpaceOnUse" x="164" y="582.500">
        <path d="M.5 0V155M0 .5H155" stroke="#868c95" fill="none" />
      </pattern>
    </defs>
    <g transform="translate(-110 -163)">
      <rect x="110" y="163" width="100%" height="100%" fill="url(#minor)" />
      <rect x="110" y="163" width="100%" height="100%" fill="url(#major)" />
      <path d="M110 583.500h4000" stroke="#91474f" strokeWidth="1.300" />
      <g fill="none" stroke="#dfe22c" strokeWidth="3" strokeLinecap="round" strokeLinejoin="round">{paths.map((d) => <path key={d} d={d} />)}</g>
      <g fill="none" stroke="#fdff22" strokeWidth="2" strokeLinecap="round" strokeLinejoin="round">{paths.map((d) => <path key={d} d={d} />)}</g>
      <circle cx="164.500" cy="582.500" r="4" fill="#fdff00" />
      <path d="M140.500 606v24.500H165M143 601h4l-4 5h4M167 626l4 5M171 626l-4 5" fill="none" stroke="#62676f" />
      <path d="M507.500 452.500v23l6.500-6h10z" fill="#fff" stroke="#34363c" strokeWidth="1.300" />
    </g>
  </Drawing>
);

const history = "Select object to trim, select pressing Shift to extend. Press Enter when done ( ExtendCuttingLines=No  ApparentIntersections=Yes  Undo )";

const ToolButton = ({ id }: { id: string }) => {
  const name = id.replace("+", "");
  return <Tool aria-label={name} $more={id.endsWith("+")}><Icon name={name} /></Tool>;
};

export default function App() {
  const [on, setOn] = useState<Record<string, boolean>>({ End: true, Quad: true, Disable: true });
  const [query, setQuery] = useState("");
  return (
    <>
      <Global />
      <Page>
        <Window>
          <TitleBar>
            <Icon name="app" size={15} />
            <Title>Rhino 8 Commercial - [Front]</Title>
            <WindowButtons>
              {["minimize", "restore", "close"].map((n) => <button key={n} aria-label={n}><Icon name={n} size={12} /></button>)}
            </WindowButtons>
          </TitleBar>
          <MenuBar>{menus.map((m) => <button key={m}>{m}</button>)}</MenuBar>
          <CommandArea>
            <CommandText>
              <Line>{history}</Line>
              <Line>{history}</Line>
              <Line>{history}</Line>
              <Prompt>
                <b>Select object to trim, select pressing Shift to extend. Press Enter when done</b>
                {" ( "}<Option>ExtendCuttingLines=<i>No</i></Option>{"  "}
                <Option>ApparentIntersections=<i>Yes</i></Option>{"  "}
                <Option>Undo</Option>{" ):"}
              </Prompt>
            </CommandText>
            <Spinner>
              <button aria-label="Previous"><Icon name="arrowup" size={7} /></button>
              <button aria-label="Next"><Icon name="arrowdown" size={7} /></button>
            </Spinner>
          </CommandArea>
          <Tabs>
            {toolTabs.map((t, i) => <Tab key={t} $on={i === 0}>{t}</Tab>)}
            <Grow />
            <button aria-label="Toolbar options"><Icon name="cog" size={10} /></button>
          </Tabs>
          <Toolbar>{topTools.map((t) => <ToolButton key={t} id={t} />)}</Toolbar>
          <Work>
            <Left>
              <ToolBox>
                <Grip />
                <ToolGrid>{sideTools.map((t) => <ToolButton key={t} id={t} />)}</ToolGrid>
              </ToolBox>
              <PanelHead><h2>Osnap</h2><button aria-label="Osnap options"><Icon name="cog" size={10} /></button></PanelHead>
              <SnapTabs>
                <button aria-label="Object snaps"><Icon name="osnap" size={20} /></button>
                <button aria-label="Selection filter"><Icon name="snapfilter" size={17} /></button>
              </SnapTabs>
              <SnapList>
                {snaps.map((s) => (
                  <SnapItem key={s} $strong={s === "Disable"}>
                    <input type="checkbox" checked={!!on[s]} onChange={() => setOn({ ...on, [s]: !on[s] })} />
                    {s}
                  </SnapItem>
                ))}
              </SnapList>
            </Left>
            <Center>
              <Viewport>
                <Scene />
                <ViewLabel>Front <Icon name="arrowdown" size={11} /></ViewLabel>
              </Viewport>
              <ViewTabs>
                {["Perspective", "Top", "Front", "Right"].map((t) => <Tab key={t} $on={t === "Front"}>{t}</Tab>)}
                <Tab aria-label="New viewport"><Icon name="plus" size={9} /></Tab>
              </ViewTabs>
            </Center>
            <Right>
              <PanelHead><h2>Layers</h2><button aria-label="Panel options"><Icon name="cog" size={10} /></button></PanelHead>
              <RightBody>
                <Layers>
                  <LayerTools>{layerTools.map((t) => <button key={t} aria-label={t}><Icon name={t} size={13} /></button>)}</LayerTools>
                  <Search>
                    <Icon name="search" size={10} />
                    <input aria-label="Search layers" placeholder="Search" value={query} onChange={(e) => setQuery(e.target.value)} />
                  </Search>
                  <TableArea>
                    <LayerTable>
                      <colgroup>
                        <col style={{ width: 59 }} /><col style={{ width: 42 }} /><col style={{ width: 24 }} />
                        <col style={{ width: 43 }} /><col style={{ width: 32 }} /><col />
                      </colgroup>
                      <thead>
                        <tr><th>Layer</th><th>Current</th><th>On</th><th>Lock</th><th>Color</th><th aria-label="Material" /></tr>
                      </thead>
                      <tbody>
                        {layers.map(([name, color]) => {
                          const current = name === "Layer 02";
                          return (
                            <LayerRow key={name} $current={current}>
                              <td>{name}</td>
                              <td>{current && <Icon name="tick" size={12} />}</td>
                              <td>{!current && <Icon name="litbulb" size={12} />}</td>
                              <td>{!current && <Icon name="unlock" size={12} />}</td>
                              <td><Swatch $color={color} aria-label={`${name} color`} /></td>
                              <td><svg width="5" height="10" aria-hidden="true"><circle cx="5" cy="5" r="4.500" fill="none" stroke="#66646b" /></svg></td>
                            </LayerRow>
                          );
                        })}
                      </tbody>
                    </LayerTable>
                    <ScrollThumb />
                  </TableArea>
                </Layers>
                <SideTabs>
                  <SideIcons>
                    {panels.map((p) => <SideTab key={p} aria-label={p} $on={p === "layers"}><Icon name={p} /></SideTab>)}
                  </SideIcons>
                </SideTabs>
              </RightBody>
            </Right>
          </Work>
          <StatusBar>
            <Cell $w={29}><Icon name="leftpane" size={12} /></Cell>
            <Cell $w={64}>CPlane</Cell>
            <Cell $w={72}>x -0.729</Cell>
            <Cell $w={80}>y 3.081</Cell>
            <Cell $w={67}>z 0</Cell>
            <Cell $w={60}>Meters</Cell>
            <Cell $w={80}><Swatch $color="#7510c8" $size={13} aria-label="Current layer color" />Layer 02</Cell>
            <Grow />
            <Toggle>Grid Snap</Toggle>
            <Toggle>Ortho</Toggle>
            <Toggle>Planar</Toggle>
            <Toggle>Osnap</Toggle>
            <Toggle>SmartTrack</Toggle>
            <Toggle $on>Gumball (CPlane)</Toggle>
            <Toggle><Icon name="padlock" size={11} />Auto CPlane (Object)</Toggle>
            <Toggle>Record History</Toggle>
            <Toggle $on>Filter</Toggle>
            <Toggle>Memory use: 470</Toggle>
            <Cell $w={38} $end><Icon name="rightpane" size={12} /></Cell>
          </StatusBar>
        </Window>
        <PageScroll><PageThumb /></PageScroll>
      </Page>
    </>
  );
}
